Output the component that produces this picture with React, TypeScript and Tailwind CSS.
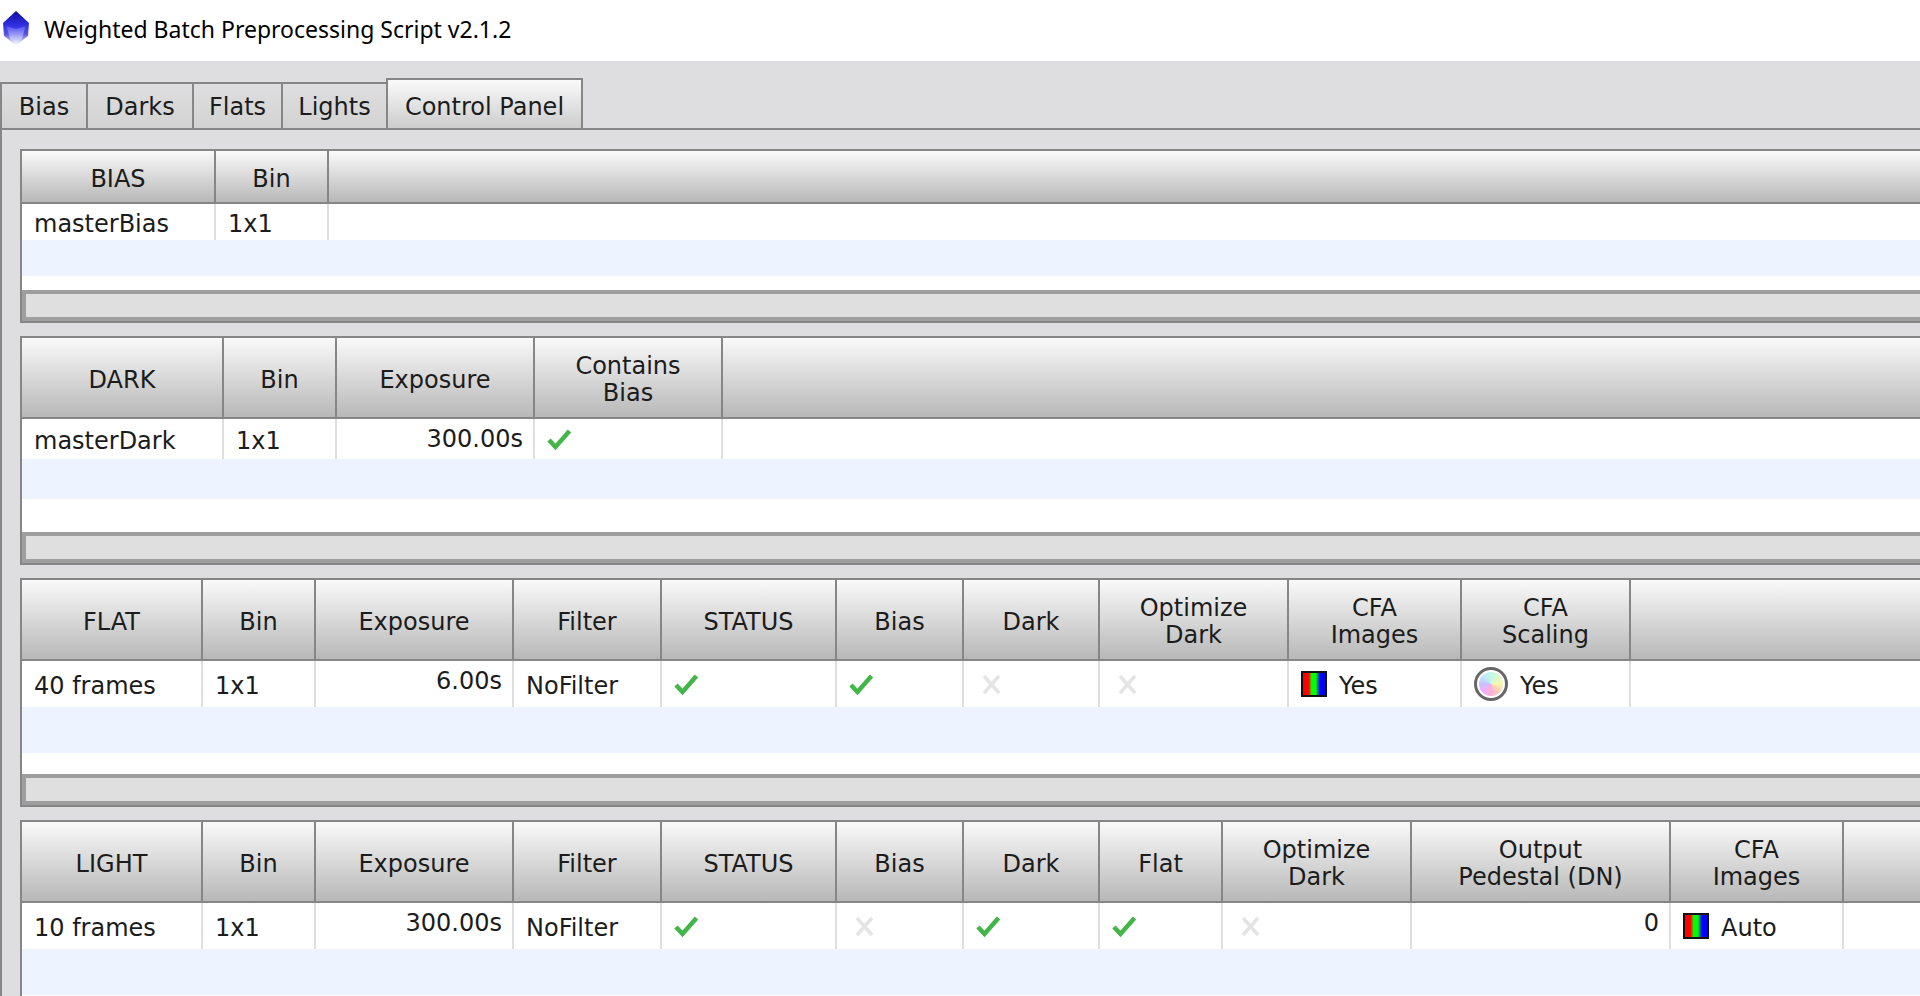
type Icon = 'check' | 'cross' | 'rgb' | 'wheel';

type Column = {
  title: string;
  width: string;
  value?: string;
  icon?: Icon;
  right?: boolean;
};

type Group = {
  head: string;
  row: string;
  filler: string;
  columns: Column[];
};

const tabs = [
  { label: 'Bias', width: 'w-[86px]' },
  { label: 'Darks', width: 'w-[106px]' },
  { label: 'Flats', width: 'w-[89px]' },
  { label: 'Lights', width: 'w-[105px]' },
  { label: 'Control Panel', width: 'w-[197px]', active: true },
];

const groups: Group[] = [
  {
    head: 'h-[53px]',
    row: 'h-9',
    filler: 'h-3.5',
    columns: [
      { title: 'BIAS', width: 'w-[194px]', value: 'masterBias' },
      { title: 'Bin', width: 'w-[113px]', value: '1x1' },
    ],
  },
  {
    head: 'h-[81px]',
    row: 'h-10',
    filler: 'h-[33px]',
    columns: [
      { title: 'DARK', width: 'w-[202px]', value: 'masterDark' },
      { title: 'Bin', width: 'w-[113px]', value: '1x1' },
      { title: 'Exposure', width: 'w-[198px]', value: '300.00s', right: true },
      { title: 'Contains\nBias', width: 'w-[188px]', icon: 'check' },
    ],
  },
  {
    head: 'h-[81px]',
    row: 'h-[46px]',
    filler: 'h-[21px]',
    columns: [
      { title: 'FLAT', width: 'w-[181px]', value: '40 frames' },
      { title: 'Bin', width: 'w-[113px]', value: '1x1' },
      { title: 'Exposure', width: 'w-[198px]', value: '6.00s', right: true },
      { title: 'Filter', width: 'w-[148px]', value: 'NoFilter' },
      { title: 'STATUS', width: 'w-[175px]', icon: 'check' },
      { title: 'Bias', width: 'w-[127px]', icon: 'check' },
      { title: 'Dark', width: 'w-[136px]', icon: 'cross' },
      { title: 'Optimize\nDark', width: 'w-[189px]', icon: 'cross' },
      { title: 'CFA\nImages', width: 'w-[173px]', icon: 'rgb', value: 'Yes' },
      { title: 'CFA\nScaling', width: 'w-[169px]', icon: 'wheel', value: 'Yes' },
    ],
  },
  {
    head: 'h-[81px]',
    row: 'h-[46px]',
    filler: 'h-[21px]',
    columns: [
      { title: 'LIGHT', width: 'w-[181px]', value: '10 frames' },
      { title: 'Bin', width: 'w-[113px]', value: '1x1' },
      { title: 'Exposure', width: 'w-[198px]', value: '300.00s', right: true },
      { title: 'Filter', width: 'w-[148px]', value: 'NoFilter' },
      { title: 'STATUS', width: 'w-[175px]', icon: 'check' },
      { title: 'Bias', width: 'w-[127px]', icon: 'cross' },
      { title: 'Dark', width: 'w-[136px]', icon: 'check' },
      { title: 'Flat', width: 'w-[123px]', icon: 'check' },
      { title: 'Optimize\nDark', width: 'w-[189px]', icon: 'cross' },
      { title: 'Output\nPedestal (DN)', width: 'w-[259px]', value: '0', right: true },
      { title: 'CFA\nImages', width: 'w-[173px]', icon: 'rgb', value: 'Auto' },
    ],
  },
];

function CellIcon({ name }: { name: Icon }) {
  if (name === 'check') {
    return (
      <svg className="w-7 h-7 shrink-0" viewBox="0 0 28 28" fill="none">
        <path d="M2 15 L8.5 22 L22.5 6" stroke="#43b649" strokeWidth="4.5" />
      </svg>
    );
  }
  if (name === 'cross') {
    return (
      <svg className="w-7 h-7 shrink-0" viewBox="0 0 28 28" fill="none">
        <path d="M8 6 L23 23 M23 6 L8 23" stroke="#e4e4e4" strokeWidth="3.5" />
      </svg>
    );
  }
  if (name === 'rgb') {
    return (
      <svg className="w-[26px] h-[26px] shrink-0" viewBox="0 0 26 26">
        <defs>
          <linearGradient id="rgbBars">
            <stop offset="0.28" stopColor="#ff0000" />
            <stop offset="0.4" stopColor="#00ff00" />
            <stop offset="0.58" stopColor="#00ff00" />
            <stop offset="0.74" stopColor="#0000ff" />
          </linearGradient>
        </defs>
        <rect x="1" y="1" width="24" height="24" fill="url(#rgbBars)" stroke="#111" strokeWidth="2" />
      </svg>
    );
  }
  return (
    <span className="w-[34px] h-[34px] shrink-0 rounded-full border-[3px] border-[#666] bg-white p-[2px]">
      <span className="block size-full rounded-full bg-[conic-gradient(#c0fbe8,#dcfbc8,#fbf6b0,#fbcfb8,#fbb0d8,#f0b0fb,#c8c0fb,#c0e8fb,#c0fbe8)]" />
    </span>
  );
}

function GroupTable({ group }: { group: Group }) {
  return (
    <section className="border-2 border-r-0 border-[#868686] bg-white">
      <table className="w-full table-fixed border-separate border-spacing-0">
        <thead>
          <tr className={group.head}>
            {group.columns.map((col) => (
              <th
                key={col.title}
                className={`${col.width} border-b-2 border-r-2 border-[#868686] bg-linear-to-b from-[#fafafa] to-[#b8b8b8] p-0 pt-[5px] text-center font-normal leading-[27px] whitespace-pre-line`}
              >
                {col.title}
              </th>
            ))}
            <td className="border-b-2 border-[#868686] bg-linear-to-b from-[#fafafa] to-[#b8b8b8] p-0" />
          </tr>
        </thead>
        <tbody>
          <tr className={group.row}>
            {group.columns.map((col) => (
              <td
                key={col.title}
                className={`border-r-2 border-[#dedede] p-0 ${col.right ? 'pt-1.5 pr-2.5 text-right align-top' : 'pl-3'}`}
              >
                <span className="flex items-center gap-3">
                  {col.icon && <CellIcon name={col.icon} />}
                  {col.value && <span className={col.right ? 'ml-auto' : 'pt-1'}>{col.value}</span>}
                </span>
              </td>
            ))}
            <td className="p-0" />
          </tr>
        </tbody>
      </table>
      <div className={`${group.row} bg-[#edf3ff]`} />
      <div className={group.filler} />
      {/* Empty horizontal scroll bar */}
      <div className="h-[31px] border-4 border-r-0 border-[#9e9e9e] bg-[#dfdfdf]" />
    </section>
  );
}

export default function App() {
  return (
    <div className="h-screen overflow-hidden bg-[#dedee0] font-['DejaVu_Sans',sans-serif] text-[24px] leading-7 text-[#1c1c1c]">
      {/* Title bar */}
      <header className="flex h-[61px] items-center gap-3.5 bg-white pb-1">
        <svg className="w-[30px] h-10 shrink-0" viewBox="0 0 30 40">
          <defs>
            <linearGradient id="gemTop" x1="0" y1="0" x2="0" y2="1">
              <stop offset="0" stopColor="#0c0ca0" />
              <stop offset="1" stopColor="#3a3af0" />
            </linearGradient>
            <linearGradient id="gemFront" x1="0" y1="0" x2="0" y2="1">
              <stop offset="0" stopColor="#3c3cf0" />
              <stop offset="0.5" stopColor="#9a9af6" />
              <stop offset="1" stopColor="#ffffff" />
            </linearGradient>
            <linearGradient id="gemSide" x1="0" y1="0" x2="0" y2="1">
              <stop offset="0" stopColor="#2a2ad8" />
              <stop offset="0.5" stopColor="#5555e0" />
              <stop offset="1" stopColor="#f0f0ff" />
            </linearGradient>
          </defs>
          <path d="M3 14 L16 17 L29 14 L28 27 L16 36 L4 27 Z" fill="url(#gemSide)" />
          <path d="M6 15 L26 15 L22 30 L16 36 L10 30 Z" fill="url(#gemFront)" />
          <path d="M16 2 L29 14 L26 17 L16 20 L6 17 L3 14 Z" fill="url(#gemTop)" />
        </svg>
        <h1 className="font-['Noto_Sans',sans-serif] text-[23px] text-black">
          Weighted Batch Preprocessing Script v2.1.2
        </h1>
      </header>

      {/* Tabs */}
      <nav className="flex items-end pt-[17px]" role="tablist">
        {tabs.map((tab) => (
          <button
            key={tab.label}
            role="tab"
            aria-selected={!!tab.active}
            className={`${tab.width} border-2 border-b-0 border-[#868686] bg-linear-to-b text-center ${
              tab.active
                ? 'h-[50px] from-[#fafafa] to-[#cdcdcd] pt-1.5'
                : 'h-[46px] border-r-0 from-[#dedee0] to-[#d3d3d3] pt-0.5'
            }`}
          >
            {tab.label}
          </button>
        ))}
      </nav>

      <main className="flex flex-col gap-[13px] border-l-2 border-t-2 border-[#868686] pl-[18px] pt-[19px]">
        {groups.map((group) => (
          <GroupTable key={group.columns[0].title} group={group} />
        ))}
      </main>
    </div>
  );
}
